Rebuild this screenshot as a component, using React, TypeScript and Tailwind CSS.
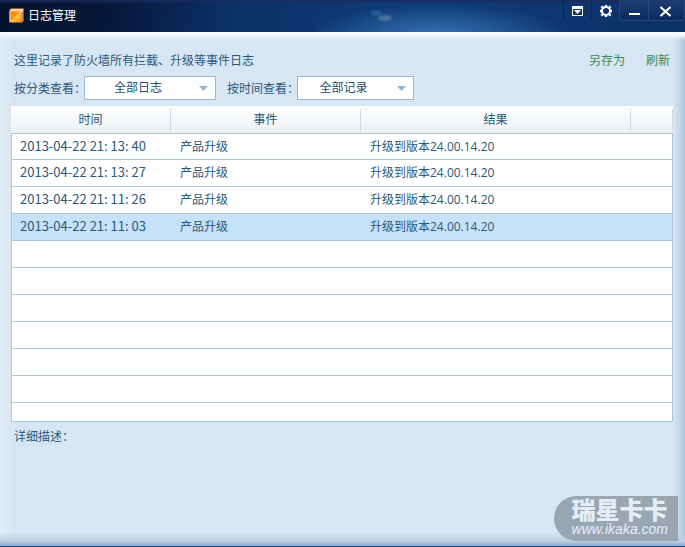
import type { ReactNode } from 'react';

type LogEntry = { time: string; event: string; result: string };

const LOGS: LogEntry[] = [
  { time: '2013-04-22 21: 13: 40', event: '产品升级', result: '升级到版本24.00.14.20' },
  { time: '2013-04-22 21: 13: 27', event: '产品升级', result: '升级到版本24.00.14.20' },
  { time: '2013-04-22 21: 11: 26', event: '产品升级', result: '升级到版本24.00.14.20' },
  { time: '2013-04-22 21: 11: 03', event: '产品升级', result: '升级到版本24.00.14.20' },
];

const SELECTED = 3;
const EMPTY_ROWS = 7;

function BookIcon() {
  return (
    <svg width="16" height="16" viewBox="0 0 16 16" aria-hidden="true">
      <defs>
        <linearGradient id="cover" x1="0" y1="0" x2="1" y2="1">
          <stop offset="0" stopColor="#ff7200" />
          <stop offset="0.48" stopColor="#ff9a1c" />
          <stop offset="0.52" stopColor="#ffc94a" />
          <stop offset="1" stopColor="#ff8c08" />
        </linearGradient>
      </defs>
      <path d="M2 0h13v13l-2 2H1l-1-1V2z" fill="#9c5230" />
      <path d="M2 1h12l-1 2H1z" fill="#ffe2ad" />
      <path d="M12 3l2-2v12l-2 1z" fill="#f6d9c0" />
      <path d="M13 4v10" stroke="#8b3f20" strokeWidth="1" />
      <path d="M1 3h11v11H1z" fill="url(#cover)" />
      <path d="M1 3h11M1 3v11" stroke="#ffc890" strokeWidth="1" />
    </svg>
  );
}

function TitleBar() {
  return (
    <header className="relative flex h-8 shrink-0 items-start justify-between overflow-hidden bg-[radial-gradient(ellipse_130px_30px_at_64%_110%,#3672b4,transparent),linear-gradient(to_bottom,#1b2a60_0%,transparent_12%),linear-gradient(100deg,#04122c_0%,#06183a_16%,#0c3068_34%,#103c7a_60%,#0c3068_100%)] pl-[9px]">
      <div className="flex items-center gap-[3px] pt-2">
        <BookIcon />
        <h1 className="text-xs leading-4 text-white">日志管理</h1>
      </div>
      <svg className="absolute top-2 left-[54%] blur-[1px]" width="24" height="16" viewBox="0 0 24 16" aria-hidden="true">
        <ellipse cx="6" cy="5" rx="6" ry="3" fill="#2f74ae" opacity="0.55" />
        <ellipse cx="15" cy="10" rx="7" ry="3" fill="#8299b3" opacity="0.5" />
      </svg>
      <div className="flex">
        <TitleButton label="菜单" className="w-7 border-l border-[#0a2454]">
          <path d="M2 2h11v10H2zM3 5v6h9V5z" fillRule="evenodd" fill="#fff" />
          <path d="M4 6h7L7.500 10z" fill="#fff" />
        </TitleButton>
        <TitleButton label="设置" className="w-7 border-l border-[#0a2454]">
          <circle cx="8" cy="7" r="4" fill="none" stroke="#fff" strokeWidth="2" />
          <path
            d="M8 1v2M8 11v2M2 7h2M12 7h2M3.400 2.400l1.600 1.600M11 10l1.600 1.600M12.600 2.400L11 4M5 10l-1.600 1.600"
            stroke="#fff"
            strokeWidth="2.4"
          />
        </TitleButton>
        <div className="flex rounded-b-sm border-x border-b border-[#28487c] bg-gradient-to-b from-[#1d3c70] to-[#0c2b60]">
          <TitleButton label="最小化" className="w-7">
            <path d="M3 9h11v2H3z" fill="#fff" />
          </TitleButton>
          <TitleButton label="关闭" className="w-9 border-l border-[#28487c]">
            <path d="M1.500 3l10 9M11.500 3l-10 9" stroke="#fff" strokeWidth="2.2" />
          </TitleButton>
        </div>
      </div>
    </header>
  );
}

function TitleButton({ label, className, children }: { label: string; className: string; children: ReactNode }) {
  return (
    <button type="button" aria-label={label} className={`flex h-5 items-center justify-center pt-1 ${className}`}>
      <svg width="16" height="16" viewBox="0 0 16 16">
        {children}
      </svg>
    </button>
  );
}

function Filter({ id, label, width, options }: { id: string; label: string; width: string; options: string[] }) {
  return (
    <div className="flex items-center">
      <label htmlFor={id} className="w-[70px] pt-[2px] whitespace-nowrap">
        {label}
      </label>
      <div className="relative">
        <select
          id={id}
          className={`block h-6 appearance-none rounded-none border border-[#9bb8cc] bg-white pr-6 text-center text-xs text-[#234e70] ${width}`}
        >
          {options.map((option) => (
            <option key={option}>{option}</option>
          ))}
        </select>
        <svg className="pointer-events-none absolute top-[10px] right-2" width="9" height="5" viewBox="0 0 9 5" aria-hidden="true">
          <path d="M0 0h9L4.500 5z" fill="#94b4cf" />
        </svg>
      </div>
    </div>
  );
}

function LogTable() {
  return (
    <table className="w-full table-fixed border-separate border-spacing-0 text-left">
      <colgroup>
        <col className="w-[160px]" />
        <col className="w-[190px]" />
        <col />
        <col className="w-[42px]" />
      </colgroup>
      <thead>
        <tr className="h-[27px] bg-gradient-to-b from-white to-[#ebf0f4] text-center">
          {['时间', '事件', '结果', ''].map((title) => (
            <th key={title} scope="col" className="p-0 py-[2px] font-normal">
              <div className="h-[22px] border-r border-[#d3dade] leading-[22px]">{title}</div>
            </th>
          ))}
        </tr>
      </thead>
      <tbody className="[&_td]:border-b [&_td]:border-[#abc7db] [&_td]:p-0 [&_td:first-child]:border-l [&_td:last-child]:border-r [&_tr:first-child_td]:border-t">
        {LOGS.map((log, i) => (
          <tr key={log.time} className={i === SELECTED ? 'h-[27px] bg-[#c6e2f8]' : 'h-[27px] bg-white'}>
            <td>
              <div className="pb-[2px] pl-2 font-['Noto_Sans_CJK_SC',sans-serif] text-[13px] leading-4">{log.time}</div>
            </td>
            <td>
              <div className="pl-[9px] leading-4">{log.event}</div>
            </td>
            <td>
              <div className="pl-[9px] leading-4">{log.result}</div>
            </td>
            <td />
          </tr>
        ))}
        {Array.from({ length: EMPTY_ROWS }, (_, i) => (
          <tr key={i} className={i === EMPTY_ROWS - 1 ? 'h-[19px] bg-white' : 'h-[27px] bg-white'}>
            <td />
            <td />
            <td />
            <td />
          </tr>
        ))}
      </tbody>
    </table>
  );
}

export default function App() {
  return (
    <div className="flex min-h-screen flex-col border-b border-[#184c88] bg-[#d8e6f3] font-['Open_Sans','Noto_Sans_CJK_SC',sans-serif] text-xs text-[#2b5778]">
      <TitleBar />
      <main className="flex grow flex-col bg-[linear-gradient(to_bottom,#f8fcff_0,#f0f7fd_3px,transparent_8px),linear-gradient(to_top,#8eaac8_0,#bdcfe2_5px,transparent_14px),linear-gradient(to_left,#adc2da_0,#c8d8ea_6px,transparent_12px),linear-gradient(to_right,#e2eef7_0,#deebf5_6px,transparent_12px)] pr-3 pl-[11px]">
        <div className="flex items-center justify-between pt-[19px] pr-[3px] pl-[3px] leading-5">
          <p>这里记录了防火墙所有拦截、升级等事件日志</p>
          <div className="flex gap-[21px] text-[#3b8a55]">
            <button type="button">另存为</button>
            <button type="button">刷新</button>
          </div>
        </div>
        <div className="flex gap-[11px] pt-[5px] pb-[6px] pl-[3px]">
          <Filter id="category" label="按分类查看：" width="w-[132px]" options={['全部日志']} />
          <Filter id="period" label="按时间查看：" width="w-[117px]" options={['全部记录']} />
        </div>
        <LogTable />
        <section className="pt-[5px] pl-[3px] leading-5">
          <h2>详细描述：</h2>
        </section>
        <div className="mt-auto -mr-[5px] mb-[5px] flex flex-col items-start self-end rounded-l-full bg-[#9aa5b2] pt-[2px] pr-[10px] pb-[5px] pl-[18px] text-[#e4edf8]">
          <span className="text-2xl leading-6 font-black">瑞星卡卡</span>
          <a href="#ikaka" className="font-['Liberation_Sans',sans-serif] text-sm leading-[14px] italic">
            www.ikaka.com
          </a>
        </div>
      </main>
    </div>
  );
}
